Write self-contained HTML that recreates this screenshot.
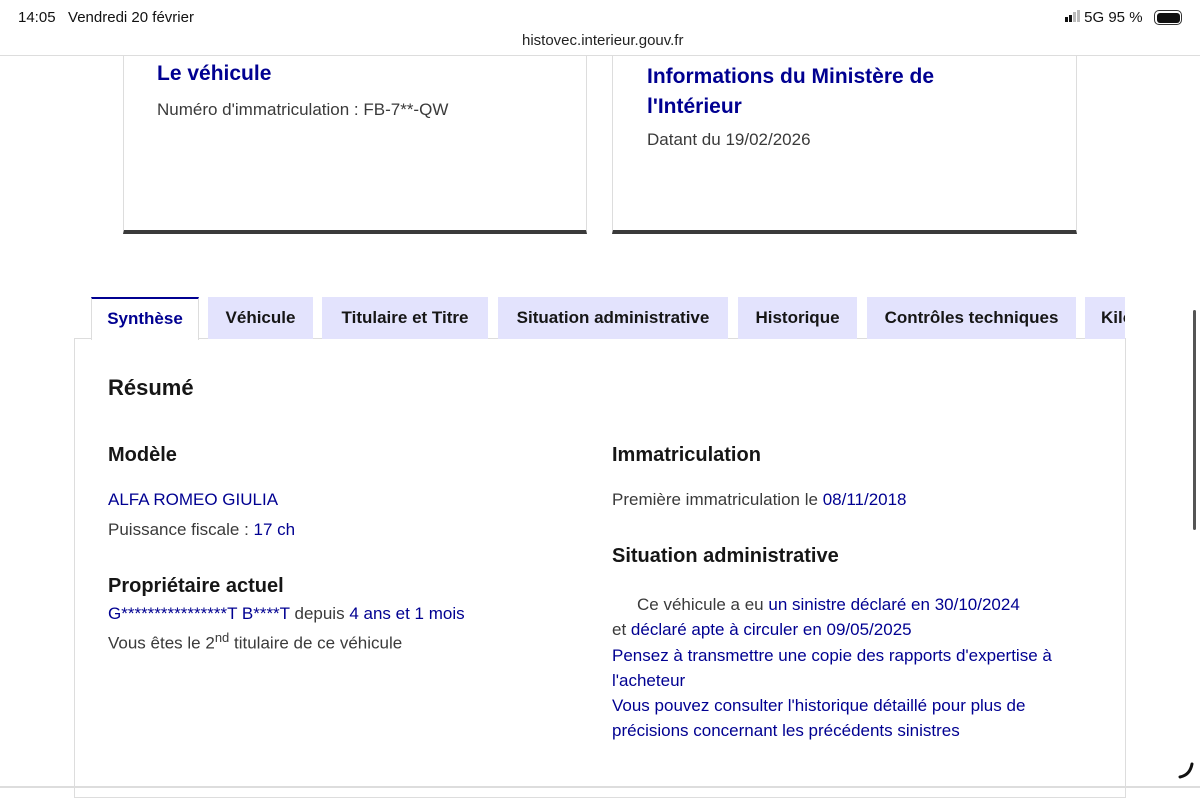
<!DOCTYPE html>
<html><head><meta charset="utf-8"><style>
*{margin:0;padding:0;box-sizing:border-box}
body{width:1200px;height:788px;overflow:hidden;background:#fff;font-family:"Liberation Sans",sans-serif;color:#3a3a3a;position:relative}
.a{position:absolute;white-space:nowrap}
.blue{color:#000091}
.tab{position:absolute;top:297px;height:42px;background:#e3e3fd;color:#161616;font-size:17px;font-weight:bold;text-align:center;line-height:42px}
h{display:block}
</style></head><body>
<div class="a" style="left:18px;top:9px;font-size:15px;color:#111">14:05&nbsp;&nbsp;&nbsp;Vendredi 20 février</div>
<div class="a" style="left:1065px;top:9px;font-size:15px;color:#111">
<span style="display:inline-block;width:3px;height:5px;background:#111"></span><span style="display:inline-block;width:3px;height:7px;background:#111;margin-left:1px"></span><span style="display:inline-block;width:3px;height:10px;background:#bbb;margin-left:1px"></span><span style="display:inline-block;width:3px;height:12px;background:#bbb;margin-left:1px"></span> 5G 95 %</div>
<div class="a" style="left:1154px;top:10px;width:28px;height:15px;border:1.5px solid #333;border-radius:5px;padding:1.5px"><div style="width:100%;height:100%;background:#111;border-radius:3px"></div></div>
<div class="a" style="left:522px;top:32px;font-size:15px;color:#222">histovec.interieur.gouv.fr</div>
<div class="a" style="left:0;top:55px;width:1200px;height:1px;background:#ddd"></div>

<div class="a" style="left:123px;top:56px;width:464px;height:178px;border:1px solid #ddd;border-top:none;border-bottom:4px solid #3a3a3a"></div>
<div class="a" style="left:612px;top:56px;width:465px;height:178px;border:1px solid #ddd;border-top:none;border-bottom:4px solid #3a3a3a"></div>
<div class="a blue" style="left:157px;top:62px;font-size:21px;font-weight:bold">Le véhicule</div>
<div class="a" style="left:157px;top:100px;font-size:17px">Numéro d'immatriculation : FB-7**-QW</div>
<div class="a blue" style="left:647px;top:62px;font-size:21px;font-weight:bold;line-height:30px;white-space:normal;width:320px">Informations du Ministère de l'Intérieur</div>
<div class="a" style="left:647px;top:130px;font-size:17px">Datant du 19/02/2026</div>

<div class="a" style="left:74px;top:338px;width:1052px;height:460px;border:1px solid #ddd"></div>
<div class="tab" style="left:91px;width:108px;background:#fff;color:#000091;border-top:2px solid #000091;border-left:1px solid #ddd;border-right:1px solid #ddd;height:43px;line-height:40px">Synthèse</div>
<div class="tab" style="left:208px;width:105px">Véhicule</div>
<div class="tab" style="left:322px;width:166px">Titulaire et Titre</div>
<div class="tab" style="left:498px;width:230px">Situation administrative</div>
<div class="tab" style="left:738px;width:119px">Historique</div>
<div class="tab" style="left:867px;width:209px">Contrôles techniques</div>
<div class="tab" style="left:1085px;width:40px;overflow:hidden;text-align:left;padding-left:16px">Kilo</div>

<div class="a" style="left:108px;top:375px;font-size:22px;font-weight:bold;color:#161616">Résumé</div>
<div class="a" style="left:108px;top:444px;font-size:20px;font-weight:bold;color:#161616">Modèle</div>
<div class="a blue" style="left:108px;top:490px;font-size:17px">ALFA ROMEO GIULIA</div>
<div class="a" style="left:108px;top:520px;font-size:17px">Puissance fiscale : <span class="blue">17 ch</span></div>
<div class="a" style="left:108px;top:575px;font-size:20px;font-weight:bold;color:#161616">Propriétaire actuel</div>
<div class="a blue" style="left:108px;top:604px;font-size:17px">G****************T B****T <span style="color:#3a3a3a">depuis</span> 4 ans et 1 mois</div>
<div class="a" style="left:108px;top:630px;font-size:17px">Vous êtes le 2<sup style="font-size:13px">nd</sup> titulaire de ce véhicule</div>

<div class="a" style="left:612px;top:444px;font-size:20px;font-weight:bold;color:#161616">Immatriculation</div>
<div class="a" style="left:612px;top:490px;font-size:17px">Première immatriculation le <span class="blue">08/11/2018</span></div>
<div class="a" style="left:612px;top:545px;font-size:20px;font-weight:bold;color:#161616">Situation administrative</div>
<div class="a" style="left:612px;top:592px;font-size:17px;line-height:25.3px;white-space:normal;width:490px">
<span style="padding-left:25px">Ce véhicule a eu </span><span class="blue">un sinistre déclaré en 30/10/2024</span><br>et <span class="blue">déclaré apte à circuler en 09/05/2025</span><br><span class="blue">Pensez à transmettre une copie des rapports d'expertise à l'acheteur<br>Vous pouvez consulter l'historique détaillé pour plus de précisions concernant les précédents sinistres</span></div>

<div class="a" style="left:1193px;top:310px;width:3px;height:220px;background:#555;border-radius:2px"></div>
<div class="a" style="left:0;top:786px;width:1200px;height:2px;background:#ddd"></div>
<svg class="a" style="left:1176px;top:760px" width="20" height="20"><path d="M4 17 Q14 15 16 4" stroke="#111" stroke-width="3" fill="none" stroke-linecap="round"/></svg>
</body></html>
